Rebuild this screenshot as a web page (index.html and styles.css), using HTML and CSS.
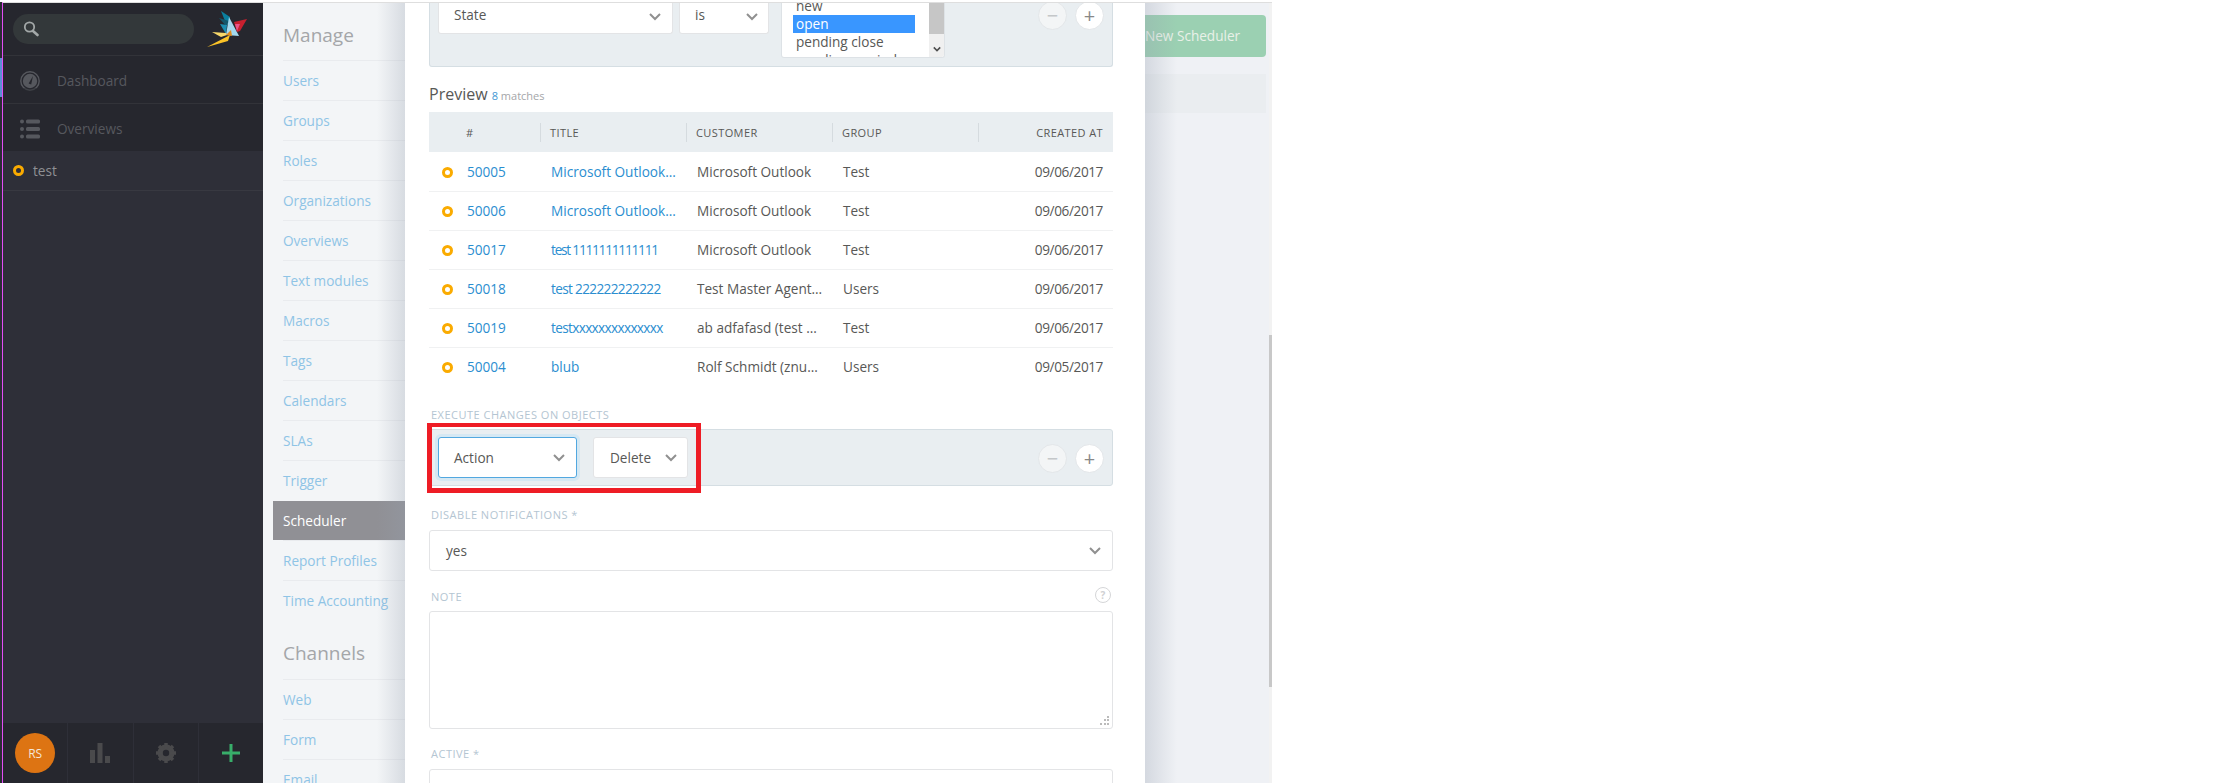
FILE: index.html
```html
<!DOCTYPE html>
<html lang="en">
<head>
    <meta charset="UTF-8">
    <title>Zammad - Scheduler</title>
    <link rel="stylesheet" href="styles.css">
</head>
<body>
    <div class="app">
        <!-- Main navigation -->
        <aside class="nav">
            <div class="nav-top">
                <div class="search-row">
                    <div class="search-pill">
                        <svg class="search-icon" viewBox="0 0 16 16"><circle cx="6.500" cy="6" r="4.700" fill="none" stroke="#a3a8a8" stroke-width="1.800"/><path d="M10 10l4.500 4" stroke="#a3a8a8" stroke-width="2.600" stroke-linecap="round"/></svg>
                    </div>
                    <svg class="logo" viewBox="0 0 40 36">
                        <path d="M14 0l9 6-3 9z" fill="#0a7f9e"/>
                        <path d="M12 7l10 3-3 5z" fill="#14576b"/>
                        <path d="M13 13l7 1-1 9z" fill="#1b8db0"/>
                        <path d="M22 6l10 19-13-1z" fill="#a3d8ee"/>
                        <path d="M27 11l13-3-7 12-3 1z" fill="#c8202f"/>
                        <path d="M28 13l5 0-3 7z" fill="#e8558a"/>
                        <path d="M5 21l14 1 1 2-6 2z" fill="#f8d86a"/>
                        <path d="M0 36l23-12-2 6z" fill="#fbc327"/>
                        <path d="M19 24l5-5 1 6z" fill="#e08a1c"/>
                    </svg>
                </div>
                <a class="nav-link">
                    <svg class="nav-icon" viewBox="0 0 20 20"><circle cx="10" cy="10" r="9.200" fill="none" stroke="#56585e" stroke-width="1.400"/><circle cx="10" cy="10" r="7.200" fill="#56585e"/><path d="M8.600 12.500l4.400-7.500-1.800 8.600z" fill="#26272e"/><path d="M4 17h12l2 3H2z" fill="#26272e" opacity=".5"/></svg>
                    <span>Dashboard</span>
                </a>
                <a class="nav-link nav-link-last">
                    <svg class="nav-icon" viewBox="0 0 20 20" fill="#56585e"><circle cx="2" cy="2.500" r="2"/><circle cx="2" cy="10" r="2"/><circle cx="2" cy="17.500" r="2"/><rect x="6" y="0.500" width="14" height="4" rx="1.500"/><rect x="6" y="8" width="14" height="4" rx="1.500"/><rect x="6" y="15.500" width="14" height="4" rx="1.500"/></svg>
                    <span>Overviews</span>
                </a>
            </div>
            <div class="nav-middle">
                <a class="overview-item"><span class="state-dot"></span>test</a>
            </div>
            <div class="nav-bottom">
                <div class="nav-cell nav-cell-avatar"><span class="avatar">RS</span></div>
                <div class="nav-cell">
                    <svg class="bottom-icon" viewBox="0 0 20 20" fill="#4a4a4c"><rect x="0" y="7" width="5" height="13"/><rect x="7.500" y="0" width="5" height="20"/><rect x="15" y="13" width="5" height="7"/></svg>
                </div>
                <div class="nav-cell">
                    <svg class="bottom-icon" viewBox="0 0 20 20"><circle cx="10" cy="10" r="6" fill="none" stroke="#4a4a4c" stroke-width="5"/><path d="M10 0v20M0 10h20M3 3l14 14M17 3L3 17" stroke="#4a4a4c" stroke-width="3.500"/><circle cx="10" cy="10" r="3.200" fill="#26272e"/></svg>
                </div>
                <div class="nav-cell">
                    <svg class="plus-icon" viewBox="0 0 18 18"><path d="M9 0v18M0 9h18" stroke="#38ae6a" stroke-width="3"/></svg>
                </div>
            </div>
        </aside>

        <!-- Manage menu -->
        <nav class="menu">
            <h2 class="menu-title">Manage</h2>
            <a class="menu-item">Users</a>
            <a class="menu-item">Groups</a>
            <a class="menu-item">Roles</a>
            <a class="menu-item">Organizations</a>
            <a class="menu-item">Overviews</a>
            <a class="menu-item">Text modules</a>
            <a class="menu-item">Macros</a>
            <a class="menu-item">Tags</a>
            <a class="menu-item">Calendars</a>
            <a class="menu-item">SLAs</a>
            <a class="menu-item">Trigger</a>
            <a class="menu-item active">Scheduler</a>
            <a class="menu-item">Report Profiles</a>
            <a class="menu-item">Time Accounting</a>
            <h2 class="menu-title channels">Channels</h2>
            <a class="menu-item">Web</a>
            <a class="menu-item">Form</a>
            <a class="menu-item">Email</a>
        </nav>

        <!-- Modal -->
        <main class="modal">
            <div class="rule-panel top-panel">
                <div class="fake-select state-select"><span>State</span><svg class="chevron" viewBox="0 0 12 8"><path d="M1 1l5 5 5-5"/></svg></div>
                <div class="fake-select is-select"><span>is</span><svg class="chevron" viewBox="0 0 12 8"><path d="M1 1l5 5 5-5"/></svg></div>
                <div class="listbox">
                    <div class="listbox-items">
                        <div class="listbox-item">new</div>
                        <div class="listbox-item selected">open</div>
                        <div class="listbox-item">pending close</div>
                        <div class="listbox-item">pending reminder</div>
                    </div>
                    <div class="listbox-scroll">
                        <div class="listbox-thumb"></div>
                        <svg class="listbox-arrow" viewBox="0 0 10 6"><path d="M1 1l4 4 4-4"/></svg>
                    </div>
                </div>
                <div class="round-btns">
                    <span class="round-btn disabled">&minus;</span>
                    <span class="round-btn">+</span>
                </div>
            </div>

            <h3 class="preview-title">Preview <small><b>8</b> matches</small></h3>
            <table class="preview-table">
                <thead>
                    <tr>
                        <th class="col-icon"></th>
                        <th class="col-num"><span>#</span></th>
                        <th class="col-title"><span>Title</span></th>
                        <th class="col-customer"><span>Customer</span></th>
                        <th class="col-group"><span>Group</span></th>
                        <th class="col-date"><span>Created at</span></th>
                    </tr>
                </thead>
                <tbody id="previewRows"></tbody>
            </table>

            <label class="field-label execute-label">Execute changes on objects</label>
            <div class="rule-panel action-panel">
                <div class="fake-select action-select"><span>Action</span><svg class="chevron" viewBox="0 0 12 8"><path d="M1 1l5 5 5-5"/></svg></div>
                <div class="fake-select delete-select"><span>Delete</span><svg class="chevron" viewBox="0 0 12 8"><path d="M1 1l5 5 5-5"/></svg></div>
                <div class="round-btns">
                    <span class="round-btn disabled">&minus;</span>
                    <span class="round-btn">+</span>
                </div>
                <div class="highlight-box"></div>
            </div>

            <label class="field-label">Disable notifications *</label>
            <div class="fake-select wide-select"><span>yes</span><svg class="chevron" viewBox="0 0 12 8"><path d="M1 1l5 5 5-5"/></svg></div>

            <div class="note-label-row">
                <label class="field-label note-label">Note</label>
                <span class="help-icon">?</span>
            </div>
            <div class="note-box">
                <svg class="resize-grip" viewBox="0 0 9 9" fill="#bbb"><rect x="7" y="0" width="2" height="2"/><rect x="4" y="3" width="2" height="2"/><rect x="7" y="3" width="2" height="2"/><rect x="0" y="7" width="2" height="2"/><rect x="4" y="7" width="2" height="2"/><rect x="7" y="7" width="2" height="2"/></svg>
            </div>

            <label class="field-label active-label">Active *</label>
            <div class="fake-select wide-select"></div>
        </main>

        <!-- Page behind the modal -->
        <section class="behind">
            <div class="new-btn">New Scheduler</div>
            <div class="behind-row"></div>
        </section>
        <div class="page-scroll"><div class="page-scroll-thumb"></div></div>
    </div>

    <script>
        // titles are cut the same way the table cuts them on screen
        const rows = [
            ["50005", "Microsoft Outlook…", "Microsoft Outlook", "Test", "09/06/2017", ""],
            ["50006", "Microsoft Outlook…", "Microsoft Outlook", "Test", "09/06/2017", ""],
            ["50017", "test 1111111111111", "Microsoft Outlook", "Test", "09/06/2017", "tighter"],
            ["50018", "test 222222222222", "Test Master Agent…", "Users", "09/06/2017", "tight"],
            ["50019", "testxxxxxxxxxxxxxx", "ab adfafasd (test …", "Test", "09/06/2017", "tight"],
            ["50004", "blub", "Rolf Schmidt (znu…", "Users", "09/05/2017", ""]
        ];

        document.getElementById('previewRows').innerHTML = rows.map(r => `
            <tr>
                <td class="col-icon"><span class="state-dot"></span></td>
                <td class="link num">${r[0]}</td>
                <td class="link ${r[5]}">${r[1]}</td>
                <td>${r[2]}</td>
                <td>${r[3]}</td>
                <td class="date">${r[4]}</td>
            </tr>
        `).join('');
    </script>
</body>
</html>
```

FILE: styles.css
```css
* {
    margin: 0;
    padding: 0;
    box-sizing: border-box;
}

html, body {
    height: 783px;
    overflow: hidden;
    background: #fff;
}

body {
    font-family: "Open Sans", "Noto Sans", sans-serif;
    font-size: 13.6px;
    color: #585856;
}

.app {
    position: relative;
    display: flex;
    width: 1270px;
    height: 781px;
    margin: 2px 0 0 2px;
    border-top: 1px solid #dedede;
    border-left: 1px solid #e24ef5;
    box-shadow: -2px 0 0 #2b2c35;
}

/* bit of a window peeking out at the left edge */
.app::before {
    content: "";
    position: absolute;
    left: -3px;
    top: 55px;
    width: 2px;
    height: 39px;
    background: #5c8fd6;
}

/* Main navigation */
.nav {
    width: 260px;
    flex-shrink: 0;
    display: flex;
    flex-direction: column;
    background: #2e2f38;
}

.nav-top {
    background: #26272e;
}

.search-row {
    height: 53px;
    display: flex;
    align-items: center;
    padding-left: 10px;
    border-bottom: 1px solid #323339;
}

.search-pill {
    width: 181px;
    height: 30px;
    border-radius: 15px;
    background: #33383a;
    display: flex;
    align-items: center;
    padding-left: 10px;
}

.search-icon {
    width: 16px;
    height: 16px;
}

.logo {
    width: 40px;
    height: 36px;
    margin-left: 13px;
}

.nav-link {
    height: 48px;
    display: flex;
    align-items: center;
    padding: 2px 0 0 17px;
    color: #56585e;
    border-bottom: 1px solid #323339;
}

.nav-link-last {
    height: 47px;
    border-bottom: none;
}

.nav-icon {
    width: 20px;
    height: 20px;
    margin-right: 17px;
}

.nav-middle {
    flex: 1;
}

.overview-item {
    height: 40px;
    display: flex;
    align-items: center;
    padding-left: 10px;
    color: #8f9094;
    border-bottom: 1px solid #383941;
}

.overview-item .state-dot {
    margin-right: 9px;
}

.state-dot {
    display: inline-block;
    width: 11px;
    height: 11px;
    border: 3px solid #faab00;
    border-radius: 50%;
}

.nav-bottom {
    height: 60px;
    display: flex;
    background: #26272e;
}

.nav-cell {
    flex: 1;
    display: flex;
    align-items: center;
    justify-content: center;
    border-left: 1px solid #2e2f38;
}

.nav-cell-avatar {
    border-left: none;
}

.avatar {
    width: 40px;
    height: 40px;
    border-radius: 50%;
    background: #dd7413;
    color: #f4e6d8;
    font-size: 12px;
    display: flex;
    align-items: center;
    justify-content: center;
}

.bottom-icon {
    width: 20px;
    height: 20px;
}

.plus-icon {
    width: 18px;
    height: 18px;
}

/* Manage menu */
.menu {
    position: relative;
    width: 142px;
    flex-shrink: 0;
    padding-left: 10px;
    background: #f3f5f7;
    overflow: hidden;
}

.menu::after {
    content: "";
    position: absolute;
    top: 0;
    bottom: 0;
    right: 0;
    width: 28px;
    background: linear-gradient(to right, rgba(150, 160, 175, 0), rgba(150, 160, 175, 0.3));
}

.menu-title {
    height: 57px;
    padding: 20px 0 0 10px;
    font-size: 19px;
    font-weight: 400;
    line-height: 24px;
    color: #a4a6a9;
}

.menu-title.channels {
    height: 59px;
    padding-top: 21px;
}

.menu-item {
    position: relative;
    display: block;
    height: 40px;
    padding: 1px 0 0 10px;
    line-height: 40px;
    color: #8fc4e6;
    white-space: nowrap;
}

.menu-item::before {
    content: "";
    position: absolute;
    left: 10px;
    right: 0;
    top: 0;
    border-top: 1px solid #e9ebee;
}

.menu-item.active {
    background: #909095;
    color: #fff;
}

.menu-item.active::before {
    left: 0;
    border-top-color: #f3f5f7;
}

/* Modal */
.modal {
    width: 740px;
    flex-shrink: 0;
    padding: 0 32px 0 24px;
    background: #fff;
    overflow: hidden;
}

.rule-panel {
    position: relative;
    display: flex;
    background: #e9eef1;
    border: 1px solid #d5dee3;
    border-radius: 3px;
}

.top-panel {
    height: 64px;
    border-top: none;
    border-radius: 0 0 3px 3px;
    padding-left: 8px;
}

.fake-select {
    position: relative;
    height: 41px;
    display: flex;
    align-items: center;
    background: #fff;
    border: 1px solid #e3e4e6;
    border-radius: 3px;
    padding-left: 15px;
    color: #585856;
}

.chevron {
    position: absolute;
    right: 11px;
    top: 50%;
    width: 12px;
    height: 8px;
    margin-top: -4px;
    fill: none;
    stroke: #909090;
    stroke-width: 2;
}

.state-select {
    width: 235px;
    height: 31px;
    margin-right: 6px;
    padding-bottom: 7px;
    border-top: none;
    border-radius: 0 0 3px 3px;
}

.is-select {
    width: 90px;
    height: 31px;
    margin-right: 12px;
    padding-bottom: 7px;
    border-top: none;
    border-radius: 0 0 3px 3px;
}

.state-select .chevron,
.is-select .chevron {
    margin-top: -5px;
}

.is-select .chevron,
.delete-select .chevron {
    right: 10px;
}

.listbox {
    width: 164px;
    height: 55px;
    display: flex;
    padding-left: 11px;
    background: #fff;
    border: 1px solid #dde2e6;
    border-top: none;
    border-radius: 0 0 3px 3px;
    overflow: hidden;
}

.listbox-items {
    width: 122px;
    margin-top: -6px;
    overflow: hidden;
}

.listbox-item {
    height: 18px;
    line-height: 18px;
    padding-left: 3px;
    white-space: nowrap;
}

.listbox-item.selected {
    background: #3996ff;
    color: #fff;
}

.listbox-scroll {
    position: relative;
    width: 15px;
    margin-left: auto;
    background: #f0f0f0;
}

.listbox-thumb {
    height: 31px;
    background: #c6c6c6;
}

.listbox-arrow {
    position: absolute;
    left: 4px;
    bottom: 5px;
    width: 8px;
    height: 6px;
    fill: none;
    stroke: #505050;
    stroke-width: 2;
}

.round-btns {
    position: absolute;
    right: 8px;
    display: flex;
    gap: 8px;
}

.top-panel .round-btns {
    top: -2px;
}

.action-panel .round-btns {
    top: 14px;
}

.round-btn {
    width: 29px;
    height: 29px;
    display: flex;
    align-items: center;
    justify-content: center;
    background: #fff;
    border: 1px solid #e3e6e9;
    border-radius: 50%;
    font-size: 20px;
    line-height: 1;
    color: #888;
}

.round-btn.disabled {
    background: #f3f5f6;
    color: #c4c7c9;
}

.preview-title {
    height: 28px;
    margin-top: 17px;
    font-size: 16px;
    font-weight: 400;
    line-height: 20px;
    color: #585856;
}

.preview-title small {
    font-size: 11px;
    color: #a4a6a9;
}

.preview-title b {
    font-weight: 400;
    color: #3f97d3;
}

.preview-table {
    width: 684px;
    border-collapse: collapse;
    table-layout: fixed;
}

.preview-table th {
    height: 40px;
    background: #e9eef1;
    font-size: 11px;
    font-weight: 400;
    letter-spacing: 0.4px;
    text-transform: uppercase;
    text-align: left;
}

.preview-table th span {
    display: block;
    height: 19px;
    line-height: 19px;
    padding-left: 9px;
    border-left: 1px solid #d5dbdf;
}

th.col-icon { width: 24px; }
th.col-num { width: 87px; }
th.col-title { width: 146px; }
th.col-customer { width: 146px; }
th.col-group { width: 146px; }

.preview-table th.col-num span {
    padding-left: 13px;
    border-left: none;
}

.preview-table th.col-date span {
    text-align: right;
    padding-right: 10px;
}

.preview-table td {
    height: 39px;
    padding-left: 11px;
    border-bottom: 1px solid #f0f1f2;
    white-space: nowrap;
    overflow: hidden;
}

.preview-table tr:last-child td {
    border-bottom: none;
}

.preview-table td.col-icon {
    padding: 2px 0 0 13px;
}

.preview-table td.num {
    padding-left: 14px;
}

td.link {
    color: #2b8ed0;
}

td.tight {
    letter-spacing: -0.65px;
}

td.tighter {
    letter-spacing: -1.2px;
}

.preview-table td.date {
    text-align: right;
    padding-right: 10px;
    letter-spacing: -0.4px;
}

.field-label {
    display: block;
    height: 16px;
    margin-top: 21px;
    padding-left: 2px;
    font-size: 11px;
    line-height: 16px;
    letter-spacing: 0.5px;
    text-transform: uppercase;
    color: #b4c5d2;
}

.action-panel {
    height: 57px;
    margin-top: 6px;
    padding: 7px 0 0 8px;
}

.action-select {
    width: 139px;
    margin-right: 16px;
    border-color: #52a8e0;
    box-shadow: 0 0 0 3px #d5e8f3;
}

.delete-select {
    width: 95px;
    padding-left: 16px;
}

.highlight-box {
    position: absolute;
    left: -3px;
    top: -7px;
    width: 274px;
    height: 70px;
    border: 5px solid #ee1c25;
    border-top-width: 4px;
}

.wide-select {
    width: 684px;
    margin-top: 7px;
    padding-left: 16px;
}

.note-label-row {
    position: relative;
}

.note-label {
    margin-top: 18px;
}

.help-icon {
    position: absolute;
    right: 2px;
    top: -2px;
    width: 16px;
    height: 16px;
    border: 1px solid #d5d6d8;
    border-radius: 50%;
    font-size: 10px;
    font-weight: 700;
    line-height: 14px;
    text-align: center;
    color: #d0d1d3;
}

.note-box {
    position: relative;
    width: 684px;
    height: 118px;
    margin-top: 6px;
    background: #fff;
    border: 1px solid #e3e4e6;
    border-radius: 3px;
}

.resize-grip {
    position: absolute;
    right: 3px;
    bottom: 3px;
    width: 9px;
    height: 9px;
}

.active-label {
    margin-top: 17px;
}

/* Page behind the modal */
.behind {
    position: relative;
    flex: 1;
    padding: 12px 3px 0 0;
    background: #eff1f5;
}

.behind::after {
    content: "";
    position: absolute;
    top: 0;
    bottom: 0;
    left: 0;
    width: 32px;
    background: linear-gradient(to right, rgba(150, 160, 175, 0.3), rgba(150, 160, 175, 0));
}

.new-btn {
    height: 42px;
    line-height: 42px;
    background: #9bd0b2;
    border-radius: 0 4px 4px 0;
    color: #e9f0e8;
    white-space: nowrap;
}

.behind-row {
    height: 39px;
    margin-top: 17px;
    background: #eaedf0;
}

.page-scroll {
    width: 3px;
    flex-shrink: 0;
    padding-top: 332px;
    background: #f2f2f2;
}

.page-scroll-thumb {
    height: 352px;
    background: #c8c8c8;
}
```
